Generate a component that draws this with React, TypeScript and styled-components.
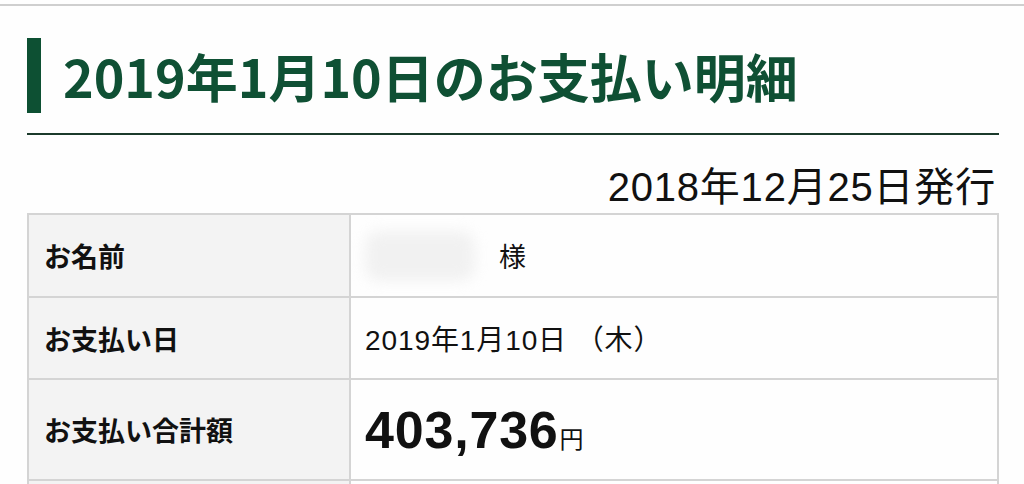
import React from "react";
import styled, { createGlobalStyle } from "styled-components";

const Global = createGlobalStyle`
  html, body { margin: 0; padding: 0; background: #fefefe; }
  body {
    font-family: "Noto Sans CJK JP", "Noto Sans", sans-serif;
    color: #111;
    overflow: hidden;
  }
`;

const TopRule = styled.div`
  margin-top: 4px;
  height: 2px;
  background: #cfcfcf;
`;

const Page = styled.main`
  padding: 32px 25px 0 27px;
`;

const TitleBlock = styled.header`
  padding-bottom: 20px;
  border-bottom: 2px solid #1b3a2b;
`;

const Title = styled.h1`
  margin: 0;
  height: 75px;
  display: flex;
  align-items: center;
  gap: 22px;
  font-size: 52px;
  font-weight: 700;
  color: #0f5034;
  line-height: 1;
`;

const TitleBar = styled.span`
  width: 14px;
  align-self: stretch;
  background: #0d5033;
`;

const Issued = styled.p`
  margin: 30px 0 0;
  height: 48px;
  text-align: right;
  font-family: "Liberation Sans", "Noto Sans CJK JP", sans-serif;
  font-size: 40px;
  font-weight: 400;
  line-height: 44px;
  letter-spacing: 0.8px;
  color: #111;
  padding-right: 3px;
`;

const Table = styled.table`
  width: 100%;
  border-collapse: collapse;
  border: 2px solid #d4d4d4;
`;

const Row = styled.tr<{ $h: number }>`
  height: ${(p) => p.$h}px;
`;

const Label = styled.th`
  width: 305px;
  padding: 0 0 0 15px;
  border: 2px solid #d4d4d4;
  background: #f3f3f3;
  text-align: left;
  font-size: 27px;
  font-weight: 700;
  color: #111;
  vertical-align: middle;
`;

const Value = styled.td`
  padding: 0 0 0 14px;
  border: 2px solid #d4d4d4;
  background: #fefefe;
  font-family: "Liberation Sans", "Noto Sans CJK JP", sans-serif;
  font-size: 28px;
  font-weight: 400;
  letter-spacing: 0.9px;
  color: #111;
  vertical-align: middle;
`;

const NameLine = styled.div`
  display: flex;
  align-items: center;
  gap: 24px;
  font-size: 27px;
  letter-spacing: 0;
`;

const Redacted = styled.span`
  display: inline-block;
  width: 110px;
  height: 50px;
  border-radius: 14px;
  background: #ececec;
  filter: blur(7px);
  opacity: 0.7;
`;

const Amount = styled.span`
  font-size: 52px;
  font-weight: 700;
  letter-spacing: 0.8px;
`;

const Yen = styled.span`
  font-family: "Noto Sans CJK JP", sans-serif;
  font-size: 24px;
  font-weight: 400;
  margin-left: 1px;
`;

export default function App() {
  return (
    <>
      <Global />
      <TopRule />
      <Page>
        <TitleBlock>
          <Title>
            <TitleBar />
            2019年1月10日のお支払い明細
          </Title>
        </TitleBlock>
        <Issued>2018年12月25日発行</Issued>
        <Table>
          <tbody>
            <Row $h={83}>
              <Label>お名前</Label>
              <Value>
                <NameLine>
                  <Redacted />
                  <span>様</span>
                </NameLine>
              </Value>
            </Row>
            <Row $h={82}>
              <Label>お支払い日</Label>
              <Value>2019年1月10日 （木）</Value>
            </Row>
            <Row $h={101}>
              <Label>お支払い合計額</Label>
              <Value>
                <Amount>403,736</Amount>
                <Yen>円</Yen>
              </Value>
            </Row>
            <Row $h={82}>
              <Label />
              <Value />
            </Row>
          </tbody>
        </Table>
      </Page>
    </>
  );
}
